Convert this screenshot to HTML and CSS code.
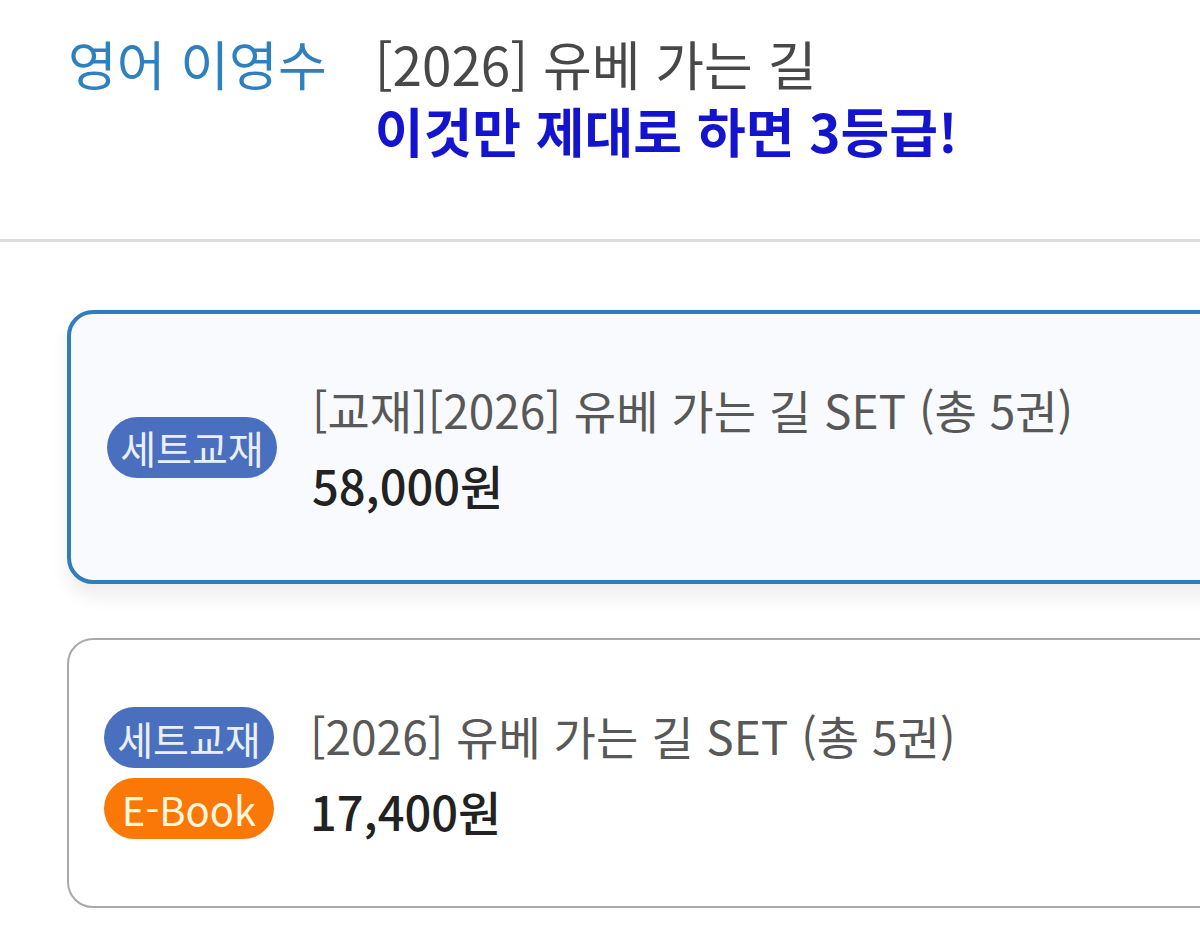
FILE: index.html
```html
<!DOCTYPE html>
<html lang="ko">
<head>
<meta charset="utf-8">
<link rel="stylesheet" href="styles.css">
</head>
<body>
<header class="head">
  <div class="teacher">영어 이영수</div>
  <div class="course">
    <div class="course-name">[2026] 유베 가는 길</div>
    <div class="course-tag">이것만 제대로 하면 3등급!</div>
  </div>
</header>
<div class="divider"></div>
<main class="list">
  <div class="card card-active">
    <div class="badges">
      <span class="badge badge-set">세트교재</span>
    </div>
    <div class="info">
      <div class="title">[교재][2026] 유베 가는 길 SET (총 5권)</div>
      <div class="price">58,000원</div>
    </div>
  </div>
  <div class="card">
    <div class="badges">
      <span class="badge badge-set">세트교재</span>
      <span class="badge badge-ebook">E-Book</span>
    </div>
    <div class="info">
      <div class="title">[2026] 유베 가는 길 SET (총 5권)</div>
      <div class="price">17,400원</div>
    </div>
  </div>
</main>
</body>
</html>
```
FILE: styles.css
```css
html, body {
  margin: 0;
  padding: 0;
  background: #ffffff;
  overflow: hidden;
}
body {
  font-family: "Noto Sans CJK KR", "Noto Sans", sans-serif;
  width: 1200px;
  height: 928px;
}
.head {
  display: flex;
  align-items: flex-start;
  gap: 48px;
  padding: 28px 0 0 68px;
  height: 209px;
  box-sizing: border-box;
}
.teacher {
  font-size: 53px;
  line-height: 70px;
  color: #2f80be;
}
.course-name {
  font-size: 53px;
  line-height: 70px;
  color: #484848;
}
.course-tag {
  font-size: 53px;
  line-height: 64px;
  font-weight: 700;
  color: #1414cf;
}
.divider {
  height: 3px;
  background: #dcdcdc;
  margin-top: 30px;
}
.list {
  padding: 68px 0 0 67px;
  display: flex;
  flex-direction: column;
  gap: 54px;
}
.card {
  width: 1200px;
  box-sizing: border-box;
  height: 270px;
  border: 2px solid #a9a9a9;
  border-radius: 26px;
  background: #ffffff;
  display: flex;
  align-items: center;
  padding-left: 35px;
  gap: 36px;
}
.card-active {
  height: 274px;
  border: 4px solid #2f7dbd;
  background: #f8fafd;
  padding-left: 36px;
  gap: 35px;
  box-shadow: 0 12px 18px rgba(0, 0, 0, 0.07);
}
.badges {
  display: flex;
  flex-direction: column;
  gap: 10px;
  width: 170px;
}
.badge {
  display: flex;
  align-items: center;
  justify-content: center;
  height: 61px;
  border-radius: 31px;
  font-size: 39px;
}
.badge-set {
  background: #4b6fbf;
  color: #e9effb;
}
.badge-ebook {
  background: #f97808;
  color: #fff6de;
  font-size: 40px;
}
.info {
  display: flex;
  flex-direction: column;
  gap: 14px;
}
.title {
  font-size: 46px;
  line-height: 62px;
  color: #585858;
}
.price {
  font-size: 47px;
  line-height: 62px;
  font-weight: 500;
  color: #222222;
}
```
